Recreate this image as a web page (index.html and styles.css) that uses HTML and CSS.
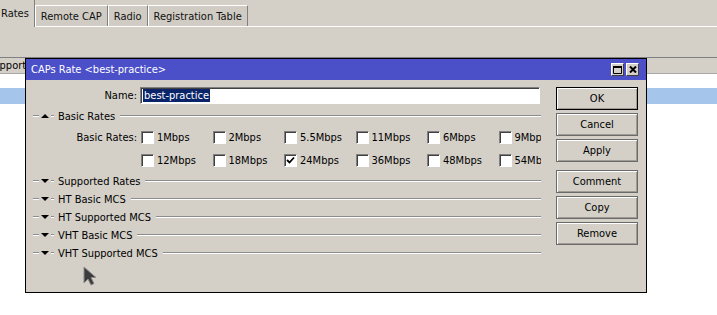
FILE: index.html
```html
<!DOCTYPE html>
<html lang="en">
<head>
    <meta charset="UTF-8">
    <title>CAPs Rate</title>
    <link rel="stylesheet" href="styles.css">
</head>
<body>
    <!-- Main window behind the dialog -->
    <div class="app">
        <div class="tabs">
            <div class="tab active">Rates</div>
            <div class="tab">Remote CAP</div>
            <div class="tab">Radio</div>
            <div class="tab">Registration Table</div>
        </div>
        <div class="toolbar"></div>
        <div class="list">
            <div class="list-head">
                <div class="col first">Supported</div>
                <div class="col"></div>
                <div class="col"></div>
                <div class="col"></div>
            </div>
            <div class="list-row"></div>
            <div class="list-row selected"></div>
        </div>
    </div>

    <!-- CAPs Rate dialog -->
    <div class="dialog">
        <div class="titlebar">
            <span class="title">CAPs Rate &lt;best-practice&gt;</span>
            <div class="title-btns">
                <span class="tbtn">
                    <svg width="9" height="8" viewBox="0 0 9 8"><path d="M0.5 0.5h8v7h-8z M0.5 1.5h8" fill="none" stroke="#000" stroke-width="1"/><rect x="0" y="0" width="9" height="2" fill="#000"/></svg>
                </span>
                <span class="tbtn">
                    <svg width="8" height="7" viewBox="0 0 8 7"><path d="M1 0.5l6 6 M7 0.5l-6 6" stroke="#000" stroke-width="2"/></svg>
                </span>
            </div>
        </div>

        <div class="dialog-body">
            <div class="form">
                <div class="field name-field">
                    <label class="field-label">Name:</label>
                    <div class="input"><span class="sel">best-practice</span></div>
                </div>

                <div class="group">
                    <span class="dash"></span><span class="arrow up"></span><span class="tick"></span>
                    <span class="group-title">Basic Rates</span><span class="rule"></span>
                </div>

                <div class="field rates-field">
                    <label class="field-label">Basic Rates:</label>
                    <div class="rate-grid">
                        <div class="rate"><span class="check"></span>1Mbps</div>
                        <div class="rate"><span class="check"></span>2Mbps</div>
                        <div class="rate"><span class="check"></span>5.5Mbps</div>
                        <div class="rate"><span class="check"></span>11Mbps</div>
                        <div class="rate"><span class="check"></span>6Mbps</div>
                        <div class="rate"><span class="check"></span>9Mbps</div>
                        <div class="rate"><span class="check"></span>12Mbps</div>
                        <div class="rate"><span class="check"></span>18Mbps</div>
                        <div class="rate"><span class="check checked"><svg width="9" height="9" viewBox="0 0 9 9"><path d="M1 4l2.5 2.5L8 1.5" fill="none" stroke="#000" stroke-width="1.8"/></svg></span>24Mbps</div>
                        <div class="rate"><span class="check"></span>36Mbps</div>
                        <div class="rate"><span class="check"></span>48Mbps</div>
                        <div class="rate"><span class="check"></span>54Mbps</div>
                    </div>
                </div>

                <div class="group">
                    <span class="dash"></span><span class="arrow"></span><span class="tick"></span>
                    <span class="group-title">Supported Rates</span><span class="rule"></span>
                </div>
                <div class="group">
                    <span class="dash"></span><span class="arrow"></span><span class="tick"></span>
                    <span class="group-title">HT Basic MCS</span><span class="rule"></span>
                </div>
                <div class="group">
                    <span class="dash"></span><span class="arrow"></span><span class="tick"></span>
                    <span class="group-title">HT Supported MCS</span><span class="rule"></span>
                </div>
                <div class="group">
                    <span class="dash"></span><span class="arrow"></span><span class="tick"></span>
                    <span class="group-title">VHT Basic MCS</span><span class="rule"></span>
                </div>
                <div class="group">
                    <span class="dash"></span><span class="arrow"></span><span class="tick"></span>
                    <span class="group-title">VHT Supported MCS</span><span class="rule"></span>
                </div>
            </div>

            <div class="buttons">
                <div class="btn default">OK</div>
                <div class="btn">Cancel</div>
                <div class="btn">Apply</div>
                <div class="btn spaced">Comment</div>
                <div class="btn">Copy</div>
                <div class="btn">Remove</div>
            </div>
        </div>
    </div>

    <!-- mouse pointer -->
    <svg class="pointer" width="14" height="21" viewBox="0 0 14 21">
        <path d="M1 1v16l4-4 3 6 3-1.5-3-6h5z" fill="#3c3c3c" stroke="#8a8a8a" stroke-width="1" stroke-linejoin="round"/>
    </svg>
</body>
</html>
```

FILE: styles.css
```css
body {
    margin: 0;
    width: 717px;
    height: 315px;
    overflow: hidden;
    position: relative;
    background: #fff;
    color: #000;
    font-family: "DejaVu Sans Condensed", "DejaVu Sans", sans-serif;
    font-stretch: condensed;
    font-size: 11px;
}

/* Main window */
.app {
    background: #d4d0c8;
}

.tabs {
    display: flex;
    height: 26px;
    margin-left: -6px;
    border-bottom: 1px solid #fff;
}

.tab {
    margin-top: 5px;
    height: 21px;
    line-height: 21px;
    padding: 0 5px;
    border-top: 1px solid #fff;
    border-left: 1px solid #fff;
    border-right: 1px solid #808080;
    box-sizing: border-box;
    background: #d0ccc4;
    color: #111;
    white-space: nowrap;
}

.tab.active {
    margin-top: 0;
    height: 27px;
    line-height: 27px;
    margin-bottom: -1px;
    padding: 0 5px 2px 6px;
    background: #d4d0c8;
    border-top: none;
}

.toolbar {
    height: 30px;
}

.list {
    background: #fff;
}

.list-head {
    display: flex;
    height: 15px;
    background: #d4d0c8;
    border-top: 1px solid #808080;
    border-bottom: 1px solid #a8a8a8;
    overflow: hidden;
}

.col {
    width: 100px;
    flex: none;
    line-height: 15px;
    border-right: 1px solid #fff;
    box-sizing: border-box;
    white-space: nowrap;
    overflow: hidden;
}

.col.first {
    width: 88px;
    text-indent: -13px;
}

.list-row {
    height: 14px;
}

.list-row.selected {
    height: 16px;
    background: #a5c5eb;
}

/* Dialog */
.dialog {
    position: absolute;
    left: 25px;
    top: 58px;
    width: 622px;
    height: 235px;
    box-sizing: border-box;
    border: 1px solid #000;
    background: #d4d0c8;
}

.titlebar {
    display: flex;
    align-items: center;
    height: 21px;
    padding: 0 7px 0 5px;
    background: #4b4fc8;
    color: #fff;
}

.title {
    flex: 1;
    font-size: 11px;
}

.title-btns {
    display: flex;
    gap: 2px;
}

.tbtn {
    display: flex;
    align-items: center;
    justify-content: center;
    width: 13px;
    height: 13px;
    box-sizing: border-box;
    background: #d4d0c8;
    border: 1px solid;
    border-color: #fff #404040 #404040 #fff;
}

.dialog-body {
    display: flex;
}

.form {
    width: 515px;
    padding-top: 7px;
}

.field {
    display: grid;
    grid-template-columns: 111px 1fr;
    column-gap: 3px;
}

.field-label {
    text-align: right;
    white-space: nowrap;
}

.name-field {
    height: 17px;
    align-items: center;
}

.input {
    width: 400px;
    height: 17px;
    box-sizing: border-box;
    background: #fff;
    border: 1px solid;
    border-color: #808080 #fff #fff #808080;
    box-shadow: inset 1px 1px 0 #404040;
    padding: 0 0 0 2px;
    line-height: 15px;
}

.sel {
    background: #0a246a;
    color: #fff;
    padding: 0 1px;
}

.group {
    display: flex;
    align-items: center;
    height: 18px;
}

.name-field + .group {
    margin-top: 3px;
}

.dash,
.tick,
.rule {
    height: 0;
    border-top: 1px solid #8c8c8c;
    border-bottom: 1px solid #fff;
}

.dash {
    width: 6px;
    margin-left: 7px;
}

.arrow {
    width: 0;
    height: 0;
    margin-left: 2px;
    border-left: 4px solid transparent;
    border-right: 4px solid transparent;
    border-top: 4px solid #000;
}

.arrow.up {
    border-top: none;
    border-bottom: 4px solid #000;
}

.tick {
    width: 3px;
    margin-left: 2px;
}

.group-title {
    margin-left: 4px;
    white-space: nowrap;
}

.rule {
    flex: 1;
    margin-left: 5px;
}

.rates-field {
    align-items: start;
    padding-top: 1px;
}

.rates-field .field-label {
    line-height: 23px;
}

.rate-grid {
    display: grid;
    grid-template-columns: repeat(6, 71.5px);
    grid-auto-rows: 23px;
    width: 401px;
    overflow: hidden;
}

.rate {
    display: flex;
    align-items: center;
    gap: 3px;
    padding-left: 1px;
    white-space: nowrap;
}

.check {
    display: flex;
    align-items: center;
    justify-content: center;
    width: 13px;
    height: 13px;
    flex: none;
    box-sizing: border-box;
    background: #fff;
    border: 1px solid;
    border-color: #808080 #fff #fff #808080;
    box-shadow: inset 1px 1px 0 #404040;
}

.buttons {
    width: 82px;
    margin-left: 15px;
    padding-top: 7px;
}

.btn {
    height: 23px;
    line-height: 21px;
    margin-bottom: 3px;
    box-sizing: border-box;
    text-align: center;
    border: 1px solid #6a6a6a;
    box-shadow: inset 1px 1px 0 #fff, inset -1px -1px 0 #a09c94;
}

.btn.default {
    border-color: #000;
}

.btn.spaced {
    margin-top: 8px;
}

.pointer {
    position: absolute;
    left: 83px;
    top: 266px;
}
```
